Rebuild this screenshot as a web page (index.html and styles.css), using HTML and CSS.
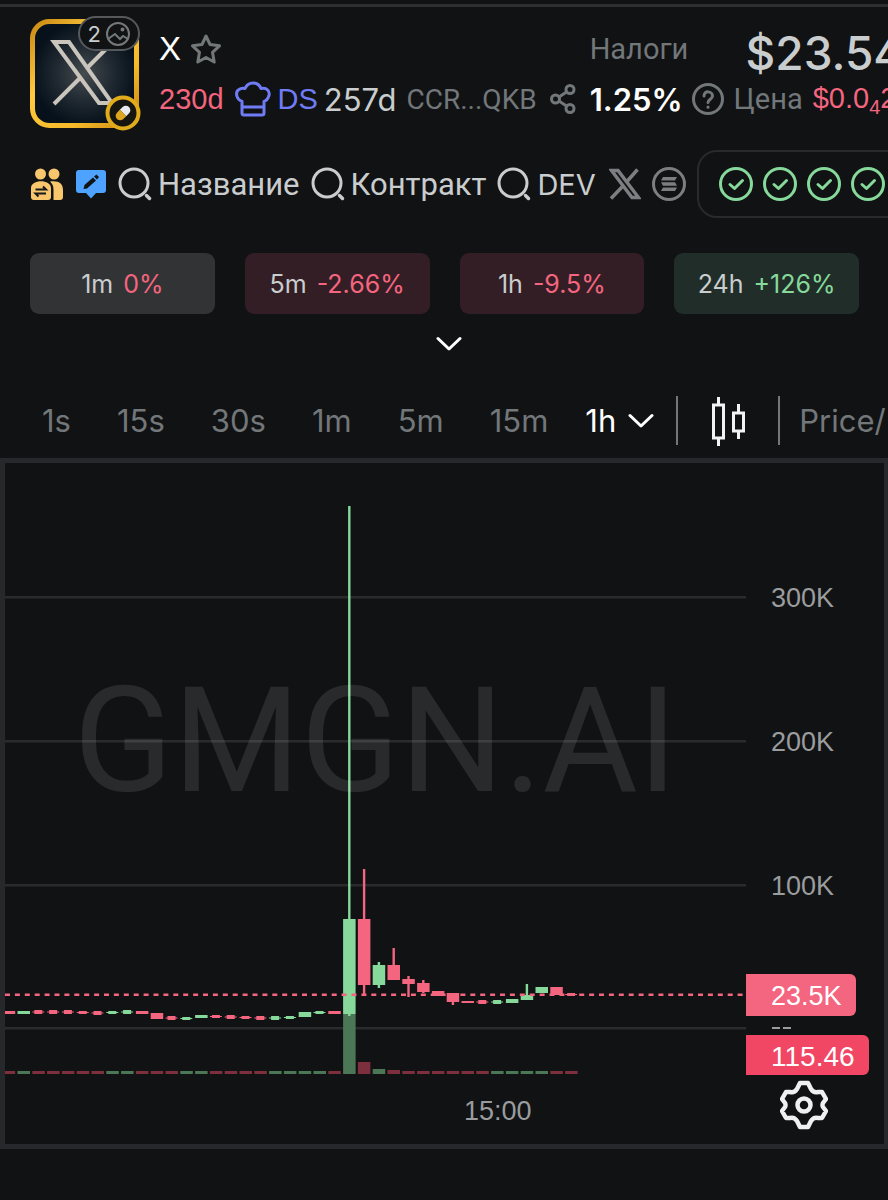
FILE: index.html
```html
<!DOCTYPE html>
<html lang="ru">
<head>
<meta charset="utf-8">
<meta name="viewport" content="width=device-width, initial-scale=1">
<title>X – GMGN.AI</title>
<link rel="stylesheet" href="styles.css">
</head>
<body>
<svg class="defs" aria-hidden="true">
  <symbol id="search" viewBox="0 0 34 34"><circle cx="16" cy="16" r="14" fill="none" stroke="currentColor" stroke-width="3"/><path d="M28.500 28.500l3 3" stroke="currentColor" stroke-width="3.500" stroke-linecap="round"/></symbol>
  <symbol id="check" viewBox="0 0 34 34"><g fill="none" stroke="currentColor" stroke-width="3" stroke-linecap="round" stroke-linejoin="round"><circle cx="17" cy="17" r="15.500"/><path d="M11 17.500l4.500 4 8-8"/></g></symbol>
  <symbol id="xlogo" viewBox="0 0 32 32"><path d="M2.500 2.500h6.500l20.500 27H23zM28.500 1.500L18 13.500M13.500 18.500L2 30.500" fill="none" stroke="currentColor" stroke-width="3.500"/></symbol>
  <symbol id="chevron" viewBox="0 0 26 16"><path d="M2 2.500l11 10.500L24 2.500" fill="none" stroke="currentColor" stroke-width="3" stroke-linecap="round" stroke-linejoin="round"/></symbol>
</svg>
<main class="page">
  <header class="token">
    <div class="avatar">
      <svg class="avatar-art" viewBox="0 0 110 110" aria-hidden="true">
        <defs>
          <linearGradient id="gold" x1="0" y1="0" x2="1" y2="1"><stop offset="0" stop-color="#c98a14"/><stop offset=".35" stop-color="#ffc83d"/><stop offset=".7" stop-color="#f5b929"/><stop offset="1" stop-color="#c88712"/></linearGradient>
          <radialGradient id="glow"><stop offset="0" stop-color="#454c50"/><stop offset=".5" stop-color="#232c34"/><stop offset="1" stop-color="#07111b"/></radialGradient>
        </defs>
        <rect x="2.500" y="2.500" width="104" height="104" rx="17" fill="url(#glow)" stroke="url(#gold)" stroke-width="5"/>
        <path d="M24 23h15l43 61H69zM78 28L58 48M50 59L24 85" fill="none" stroke="#c9c4bc" stroke-width="4"/>
      </svg>
      <span class="count">2
        <svg width="24" height="24" viewBox="0 0 24 24" fill="none" stroke="#74797b" stroke-width="2" aria-hidden="true"><circle cx="12" cy="12" r="11"/><path d="M2 17l7-5 5 5 3-3 5 3"/><circle cx="16.500" cy="7.500" r="1"/></svg>
      </span>
      <svg class="pill-badge" viewBox="0 0 36 36" aria-hidden="true"><circle cx="18" cy="18" r="15.500" fill="#17150f" stroke="#e0ac1c" stroke-width="4"/><g transform="rotate(45 18 18)"><path d="M13.500 18v-4a4.500 4.500 0 0 1 9 0v4z" fill="#e8eaec"/><path d="M13.500 18v4a4.500 4.500 0 0 0 9 0v-4z" fill="#e0a51f"/></g></svg>
    </div>
    <div class="info">
      <div class="line name-line">
        <h1 class="name">X</h1>
        <button class="icon-btn" aria-label="В избранное"><svg width="30" height="30" viewBox="0 0 30 30" fill="none" stroke="#72777a" stroke-width="3" stroke-linejoin="round"><path d="M15 2l4 8.500 9.500 1.300-7 6.500 1.700 9.700-8.200-4.500L6.800 28l1.700-9.700-7-6.500L11 10.500z"/></svg></button>
      </div>
      <div class="line meta">
        <span class="red">230d</span>
        <svg width="36" height="36" viewBox="0 0 36 36" fill="none" stroke="#6f7cf5" stroke-width="3" stroke-linejoin="round" aria-hidden="true"><path d="M7 20.500C1 18 0 11 4 8.500c2-1.500 4-1.500 6-1 3-7.500 13-7.500 16 0 6-1.500 9 3 8 7-1 3-2 5-5 6V32q0 2-2 2H9q-2 0-2-2zM7 26h22"/></svg>
        <a class="ds" href="#ds">DS</a>
        <span class="age">257d</span>
        <span class="addr">CCR...QKB</span>
        <button class="icon-btn share" aria-label="Поделиться"><svg width="26" height="30" viewBox="0 0 26 30" fill="none" stroke="#72777a" stroke-width="3"><circle cx="5.500" cy="15" r="4"/><circle cx="20" cy="5.500" r="4"/><circle cx="20" cy="24.500" r="4"/><path d="M9 13l7.500-5M9 17l7.500 5"/></svg></button>
      </div>
    </div>
    <div class="tax">
      <div class="line muted">Налоги</div>
      <div class="line meta">
        <strong class="rate">1.25%</strong>
        <button class="icon-btn help" aria-label="Справка"><svg width="32" height="32" viewBox="0 0 32 32" fill="none" stroke="#72777a" stroke-width="3" stroke-linecap="round"><circle cx="16" cy="16" r="14.500"/><path d="M12 13c0-6 8.500-5 8.500 0 0 3-4.500 3.500-4.500 6.500"/><path d="M16 24v.2"/></svg></button>
      </div>
    </div>
    <div class="price">
      <div class="line cap">$23.54</div>
      <div class="line meta"><span class="muted">Цена</span> <span class="red">$0.0<sub>4</sub>2</span></div>
    </div>
  </header>

  <nav class="links">
    <button class="icon-btn" aria-label="Сообщество"><svg width="34" height="34" viewBox="0 0 34 34" fill="#f7c66d"><circle cx="10.500" cy="7" r="5.500"/><circle cx="24" cy="7" r="5.500"/><path d="M1 21c0-9 20-9 20 0v9c0 2-1 3-3 3H4c-2 0-3-1-3-3zM20 14.500c9-1 13 2 13 8.500v7c0 2-1 3-3 3h-6.500v-9c0-4 0-6-3.500-9.500z"/><path d="M5.500 22.500H16l-3-3M16 26.500H5.500l3 3" fill="none" stroke="#17181a" stroke-width="2"/></svg></button>
    <button class="icon-btn" aria-label="Заметка"><svg width="30" height="32" viewBox="0 0 30 32"><path d="M3 2h24q3 0 3 3v17q0 3-3 3h-7l-5 5.500-5-5.500H3q-3 0-3-3V5q0-3 3-3z" fill="#4da3ff"/><path d="M7.500 21l1-4L17 9.500l3 3L11 20.500zM18 8.500l2.500-2 2.500 2.500-2 2.500z" fill="#111315"/></svg></button>
    <button class="find"><svg width="34" height="34"><use href="#search"/></svg>Название</button>
    <button class="find"><svg width="34" height="34"><use href="#search"/></svg>Контракт</button>
    <button class="find latin"><svg width="34" height="34"><use href="#search"/></svg>DEV</button>
    <a class="ext" href="#x" aria-label="X"><svg width="32" height="32"><use href="#xlogo"/></svg></a>
    <a class="ext" href="#explorer" aria-label="Solscan"><svg width="34" height="34" viewBox="0 0 34 34"><circle cx="17" cy="17" r="15.500" fill="none" stroke="currentColor" stroke-width="3"/><path d="M11 10h14l-2 3.500H9zM9 15.300h14l2 3.500H11zM11 20.500h14L23 24H9z" fill="currentColor"/></svg></a>
    <div class="audit" aria-label="Проверки">
      <svg width="34" height="34"><use href="#check"/></svg>
      <svg width="34" height="34"><use href="#check"/></svg>
      <svg width="34" height="34"><use href="#check"/></svg>
      <svg width="34" height="34"><use href="#check"/></svg>
    </div>
  </nav>

  <section class="changes">
    <button class="change flat">1m <b class="red">0%</b></button>
    <button class="change down">5m <b class="red">-2.66%</b></button>
    <button class="change down">1h <b class="red">-9.5%</b></button>
    <button class="change up">24h <b class="green">+126%</b></button>
  </section>
  <button class="expand" aria-label="Развернуть"><svg width="26" height="16"><use href="#chevron"/></svg></button>

  <nav class="toolbar">
    <button>1s</button>
    <button>15s</button>
    <button>30s</button>
    <button>1m</button>
    <button>5m</button>
    <button>15m</button>
    <button class="active">1h <svg width="26" height="16"><use href="#chevron"/></svg></button>
    <span class="divider"></span>
    <button class="candle-btn" aria-label="Тип графика"><svg width="36" height="50" viewBox="0 0 36 50" fill="none" stroke="#f1f3f4" stroke-width="3"><rect x="2.500" y="9" width="10" height="33"/><path d="M7.500 1v8M7.500 42v8"/><rect x="22.500" y="17" width="10" height="18"/><path d="M27.500 8v9M27.500 35v8"/></svg></button>
    <span class="divider"></span>
    <button class="mode">Price/</button>
  </nav>

  <section class="chart">
    <div class="plot">
      <svg id="candles" class="candles" viewBox="0 0 741 615" preserveAspectRatio="none" role="img" aria-label="График цены"></svg>
      <span class="watermark">GMGN.AI</span>
    </div>
    <div class="axis">
      <span class="tick">300K</span>
      <span class="tick">200K</span>
      <span class="tick">100K</span>
      <span class="tag last">23.5K</span>
      <span class="none"><i></i><i></i></span>
      <span class="tag volume">115.46</span>
      <button class="icon-btn gear" aria-label="Настройки"><svg width="48" height="50" viewBox="0 0 48 50" fill="none" stroke="#eef1f3" stroke-width="4.500" stroke-linejoin="round"><path d="M20 3h8l3 6c2 3 4 4 7 3h4l4 7-3 4c-1 2-1 2 0 4l3 4-4 7h-4c-3-1-5 0-7 3l-3 6h-8l-3-6c-2-3-4-4-7-3H6l-4-7 3-4c1-2 1-2 0-4l-3-4 4-7h4c3 1 5 0 7-3z"/><circle cx="24" cy="25" r="6.500"/></svg></button>
    </div>
    <time class="time">15:00</time>
  </section>
</main>
<script src="chart.js"></script>
</body>
</html>
```
FILE: styles.css
```css
* { box-sizing: border-box; }
body { margin: 0; background: #111214; color: #c9cdce; font-family: "Liberation Sans", Arial, sans-serif; font-size: 29px; }
button { border: 0; padding: 0; margin: 0; background: none; color: inherit; font: inherit; cursor: pointer; }
a { color: inherit; text-decoration: none; }
svg { display: block; flex: none; }
.defs { position: absolute; width: 0; height: 0; }
.red { color: #f4657f; }
.green { color: #86d99b; }
.muted { color: #72777a; font-family: Roboto, sans-serif; }
.icon-btn { display: block; flex: none; }

.page { min-height: 100vh; overflow: hidden; margin-top: 4px; border-top: 3px solid #2e2f32; }
.token { display: flex; padding: 12px 0 0 30px; white-space: nowrap; }
.token > * { flex: none; }
.avatar { position: relative; width: 110px; height: 110px; margin-right: 19px; }
.avatar-art { width: 100%; height: 100%; }
.count { position: absolute; top: -3px; right: 0; display: flex; align-items: center; gap: 5px; height: 35px; padding: 0 8px; border: 2px solid #55595c; border-radius: 18px; background: #111214; font-family: Inter, sans-serif; font-size: 22px; }
.pill-badge { position: absolute; right: -1px; bottom: -2px; width: 36px; height: 36px; }
.line { display: flex; align-items: center; height: 50px; }
.info { padding-top: 5px; margin-right: 14px; }
.name-line { gap: 10px; }
.name { margin: 0; color: #fff; font-size: 33px; font-weight: 400; }
.age { font-family: Inter, sans-serif; font-size: 31px; margin: 0 10px 0 6px; }
.meta > svg { margin: 0 7px 0 11px; }
.ds { color: #6f7cf5; }
.addr { color: #72777a; font-family: Roboto, sans-serif; font-size: 28px; }
.share { margin-left: 13px; }
.tax { padding-top: 5px; margin-right: 10px; }
.rate { color: #fff; font-family: Inter, sans-serif; font-size: 31px; font-weight: 600; }
.help { margin-left: 9px; }
.price { padding-top: 5px; }
.price .red { margin-left: 10px; }
.price sub { font-size: 20px; vertical-align: -6px; line-height: 1; }
.cap { padding: 7px 0 0 12px; font-family: Inter, sans-serif; font-size: 46px; font-weight: 500; }

.links { display: flex; align-items: center; padding: 21px 0 0 30px; white-space: nowrap; }
.links > * { flex: none; }
.links .icon-btn { margin-right: 12px; }
.find { display: flex; align-items: center; gap: 6px; margin-right: 11px; font-family: Roboto, sans-serif; font-size: 31px; }
.latin { margin-right: 13px; font-family: Inter, sans-serif; font-size: 29px; }
.ext { margin-right: 11px; color: #7b7f82; }
.audit { display: flex; align-items: center; gap: 10px; height: 68px; padding: 0 20px; border: 2px solid #292a2d; border-radius: 20px; color: #86d99b; }

.changes { display: grid; grid-template-columns: repeat(4, 1fr); gap: 30px; padding: 35px 29px 0 30px; }
.change { height: 61px; border-radius: 9px; font-family: Inter, sans-serif; font-size: 25px; white-space: nowrap; }
.change b { margin-left: 3px; font-weight: 400; }
.flat { background: #323335; }
.down { background: #341e25; }
.up { background: #212d28; }
.expand { display: flex; justify-content: center; width: 100%; padding: 22px 0 21px 10px; color: #fff; }

.toolbar { display: flex; align-items: center; height: 85px; padding: 10px 0 0 42px; gap: 46px; color: #72777a; font-family: Inter, sans-serif; font-size: 31px; white-space: nowrap; }
.toolbar > * { flex: none; }
.toolbar .active { display: flex; align-items: center; gap: 12px; margin: 0 -24px 0 -9px; color: #fff; }
.divider { width: 2px; height: 49px; background: #72777a; }
.candle-btn { margin: 0 -15px 0 -13px; }
.toolbar .mode { margin-left: -27px; }

.chart { display: grid; grid-template-columns: 1fr 138px; border: 5px solid #27282c; border-right-width: 4px; }
.plot { display: grid; height: 615px; }
.candles { grid-area: 1 / 1; width: 100%; height: 100%; }
.watermark { grid-area: 1 / 1; place-self: center; padding-bottom: 58px; color: rgba(255, 255, 255, .1); font-family: Roboto, sans-serif; font-size: 146px; line-height: 1; }
.axis { grid-row: 1 / 3; grid-column: 2; display: flex; flex-direction: column; align-items: flex-start; padding-top: 63px; color: #9a9c9e; font-size: 27px; }
.tick { height: 144px; padding-left: 25px; line-height: 144px; }
.tag { height: 42px; padding: 0 14px 0 25px; border-radius: 0 6px 6px 0; color: #fff; line-height: 44px; }
.last { margin-top: 16px; background: #f4657f; }
.volume { height: 40px; background: #f24665; font-size: 28px; }
.none { display: flex; align-items: center; gap: 3px; height: 19px; padding: 5px 0 0 26px; }
.none i { width: 8px; height: 2px; background: #9a9c9e; }
.gear { margin: 5px 0 0 34px; }
.time { height: 66px; padding-left: 459px; color: #9a9c9e; font-size: 27px; line-height: 66px; }
```
FILE: chart.js
```js
const NS = "http://www.w3.org/2000/svg";
const svg = document.getElementById("candles");
const STEP = 14.8;
const FIRST = 3.7;

function rect(x, y, w, h, fill) {
  const r = document.createElementNS(NS, "rect");
  r.setAttribute("x", x);
  r.setAttribute("y", y);
  r.setAttribute("width", w);
  r.setAttribute("height", h);
  r.setAttribute("fill", fill);
  svg.appendChild(r);
}

// [direction, body top, body bottom, wick top, wick bottom, narrow body]
const candles = [
  ["r", 548, 551], ["g", 548, 551], ["r", 547, 551, 0, 0, 1], ["r", 547, 551, 0, 0, 1],
  ["r", 547, 551, 0, 0, 1], ["r", 548, 551, 0, 0, 1], ["r", 548, 552, 0, 0, 1], ["g", 548, 551, 0, 0, 1],
  ["g", 547, 551, 0, 0, 1], ["r", 548, 551], ["r", 550, 556], ["r", 553, 557, 0, 0, 1],
  ["g", 554, 557, 0, 0, 1], ["g", 552, 555], ["r", 552, 555, 0, 0, 1], ["r", 552, 556, 0, 0, 1],
  ["r", 553, 556, 0, 0, 1], ["r", 553, 557, 0, 0, 1], ["g", 553, 557, 0, 0, 1], ["g", 553, 556, 0, 0, 1],
  ["g", 549, 554], ["g", 548, 551, 0, 0, 1], ["r", 548, 551],
  ["g", 456, 551, 43, 553], ["r", 456, 522, 406, 532], ["g", 502, 522, 499, 525],
  ["r", 502, 517, 485, 517], ["r", 516, 521, 513, 534], ["r", 520, 529, 517, 530], ["r", 528, 533],
  ["r", 530, 539, 530, 542], ["r", 538, 540], ["r", 537, 541, 0, 0, 1], ["g", 537, 541, 0, 0, 1],
  ["g", 536, 540], ["g", 532, 537, 521, 537], ["g", 524, 530], ["r", 524, 532], ["r", 530, 533, 0, 0, 1]
];
const volumes = { 23: 60, 24: 12, 25: 5, 26: 4 };
const solid = { r: "#f4657f", g: "#86d99b" };
const dim = { r: "#7d2f3e", g: "#4c7757" };

for (const y of [133, 277, 421, 564]) rect(0, y, 741, 2.5, "#2a2b2d");
candles.forEach(([dir, top, bottom, high, low, narrow], i) => {
  const cx = FIRST + i * STEP;
  const vol = volumes[i] || 3;
  rect(cx - 6, 611 - vol, 12.5, vol, dim[dir]);
  if (high) rect(cx - 1, high, 2.4, low - high, solid[dir]);
  if (narrow) {
    rect(cx - 6, (top + bottom) / 2 - 0.5, 12, 1, solid[dir]);
    rect(cx - 4, top, 8, bottom - top, solid[dir]);
  } else {
    rect(cx - 6, top, 12.5, bottom - top, solid[dir]);
  }
});
for (let x = 0; x < 738; x += 9.9) rect(x, 530.5, 5, 2.5, "#f4657f");
```
